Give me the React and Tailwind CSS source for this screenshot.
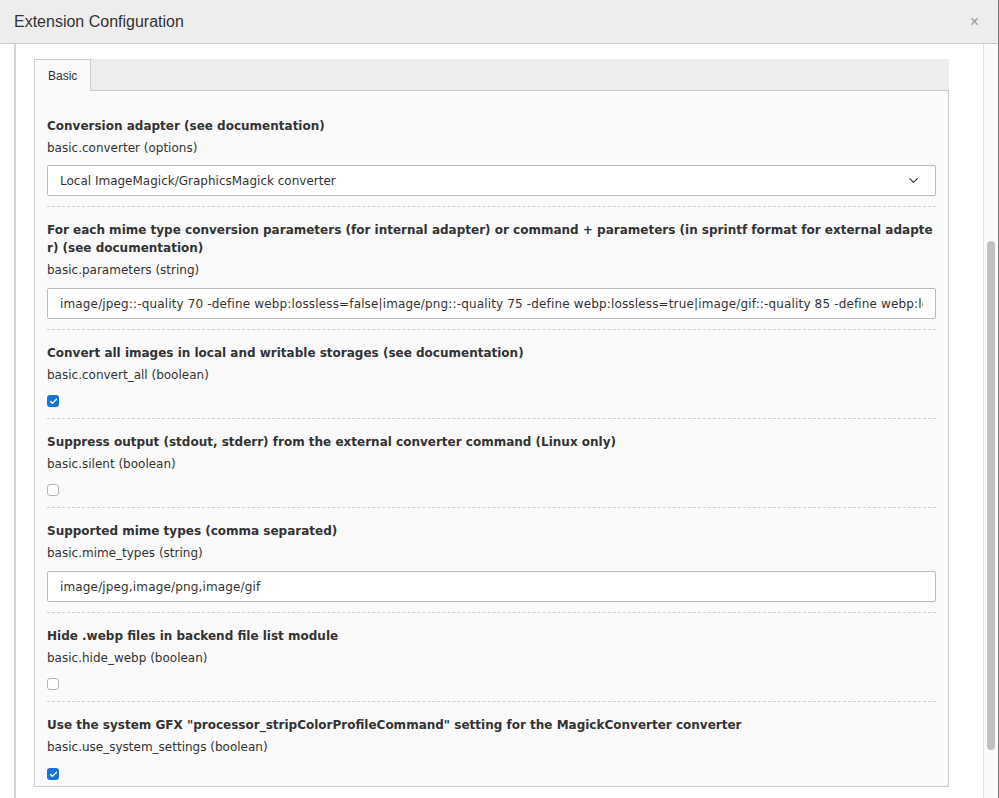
import { ChevronDown, Check } from "lucide-react";

const font = { fontFamily: '"DejaVu Sans", Verdana, sans-serif' };

function Checkbox({ checked }) {
  if (checked) {
    return (
      <div className="w-[12px] h-[12px] rounded-[3px] bg-[#1a73d9] flex items-center justify-center">
        <Check size={9} strokeWidth={3.5} className="text-white" />
      </div>
    );
  }
  return <div className="w-[12px] h-[12px] rounded-[3px] border border-[#b5b5b5] bg-white" />;
}

function Field({ label, desc, children, last }) {
  return (
    <div
      className={
        "pt-[14px] " +
        (last ? "pb-[6px]" : "border-b border-dashed border-[#cfcfcf]")
      }
    >
      <div className="text-[12px] leading-[18px] font-bold text-[#333] break-all">{label}</div>
      <div className="mt-[4px] text-[12px] leading-[18px] text-[#333]">{desc}</div>
      {children}
    </div>
  );
}

function TextInput({ value }) {
  return (
    <div className="mt-[9px] mb-[10px]">
      <input
        readOnly
        value={value}
        style={font}
        className="w-full h-[31px] border border-[#bbb] rounded-[2px] bg-white px-[12px] text-[12px] tracking-[0.15px] text-[#333] outline-none"
      />
    </div>
  );
}

function BoolInput({ checked }) {
  return (
    <div className="mt-[11px] mb-[11px]">
      <Checkbox checked={checked} />
    </div>
  );
}

export default function App() {
  return (
    <div className="w-[999px] h-[798px] overflow-hidden bg-white flex">
      <div className="flex-1 flex flex-col min-w-0">
        {/* header */}
        <div
          className="h-[44px] shrink-0 bg-[#ededed] border-b border-[#c9c9c9] flex items-center justify-between pl-[14px] pr-[19px]"
          style={{ fontFamily: '"Liberation Sans", Arial, sans-serif' }}
        >
          <span className="text-[16px] text-[#333]">Extension Configuration</span>
          <span className="text-[16px] text-[#999] leading-none">×</span>
        </div>

        <div className="flex-1 flex min-h-0">
          <div className="w-[14px] shrink-0" />
          <div className="w-[2px] shrink-0 bg-[#d6d6d6]" />

          {/* body */}
          <div className="flex-1 pl-[18px] pr-[34px] pt-[15px] min-w-0" style={font}>
            <div className="h-[31px] bg-[#ededed] flex items-end rounded-tr-[2px]">
              <div
                className="h-[32px] w-[57px] -mb-px relative z-10 bg-[#fafafa] border border-b-0 border-[#ccc] flex items-center pl-[13px] text-[12px] text-[#333]"
                style={{ fontFamily: '"Liberation Sans", Arial, sans-serif' }}
              >
                Basic
              </div>
            </div>
            <div className="border border-[#ccc] bg-[#fafafa] px-[12px] pt-[12px]">
              <Field label="Conversion adapter (see documentation)" desc="basic.converter (options)">
                <div className="mt-[8px] mb-[10px] h-[31px] border border-[#bbb] rounded-[2px] bg-white flex items-center justify-between pl-[12px] pr-[14px] text-[12px] text-[#333]">
                  <span>Local ImageMagick/GraphicsMagick converter</span>
                  <ChevronDown size={15} strokeWidth={1.8} className="text-[#333]" />
                </div>
              </Field>
              <Field
                label="For each mime type conversion parameters (for internal adapter) or command + parameters (in sprintf format for external adapter) (see documentation)"
                desc="basic.parameters (string)"
              >
                <TextInput value="image/jpeg::-quality 70 -define webp:lossless=false|image/png::-quality 75 -define webp:lossless=true|image/gif::-quality 85 -define webp:lossless=true" />
              </Field>
              <Field label="Convert all images in local and writable storages (see documentation)" desc="basic.convert_all (boolean)">
                <BoolInput checked />
              </Field>
              <Field label="Suppress output (stdout, stderr) from the external converter command (Linux only)" desc="basic.silent (boolean)">
                <BoolInput />
              </Field>
              <Field label="Supported mime types (comma separated)" desc="basic.mime_types (string)">
                <TextInput value="image/jpeg,image/png,image/gif" />
              </Field>
              <Field label="Hide .webp files in backend file list module" desc="basic.hide_webp (boolean)">
                <BoolInput />
              </Field>
              <Field
                last
                label={'Use the system GFX "processor_stripColorProfileCommand" setting for the MagickConverter converter'}
                desc="basic.use_system_settings (boolean)"
              >
                <div className="mt-[12px]">
                  <Checkbox checked />
                </div>
              </Field>
            </div>
          </div>

          {/* scrollbar */}
          <div className="w-[15px] shrink-0 border-l border-[#e3e3e3] bg-[#fafafa] flex flex-col pt-[197px] pl-[3px]">
            <div className="w-[8px] h-[509px] rounded-full bg-[#c1c1c1]" />
          </div>
        </div>
      </div>
      <div className="w-px shrink-0 bg-[#7a7a7a]" />
    </div>
  );
}
